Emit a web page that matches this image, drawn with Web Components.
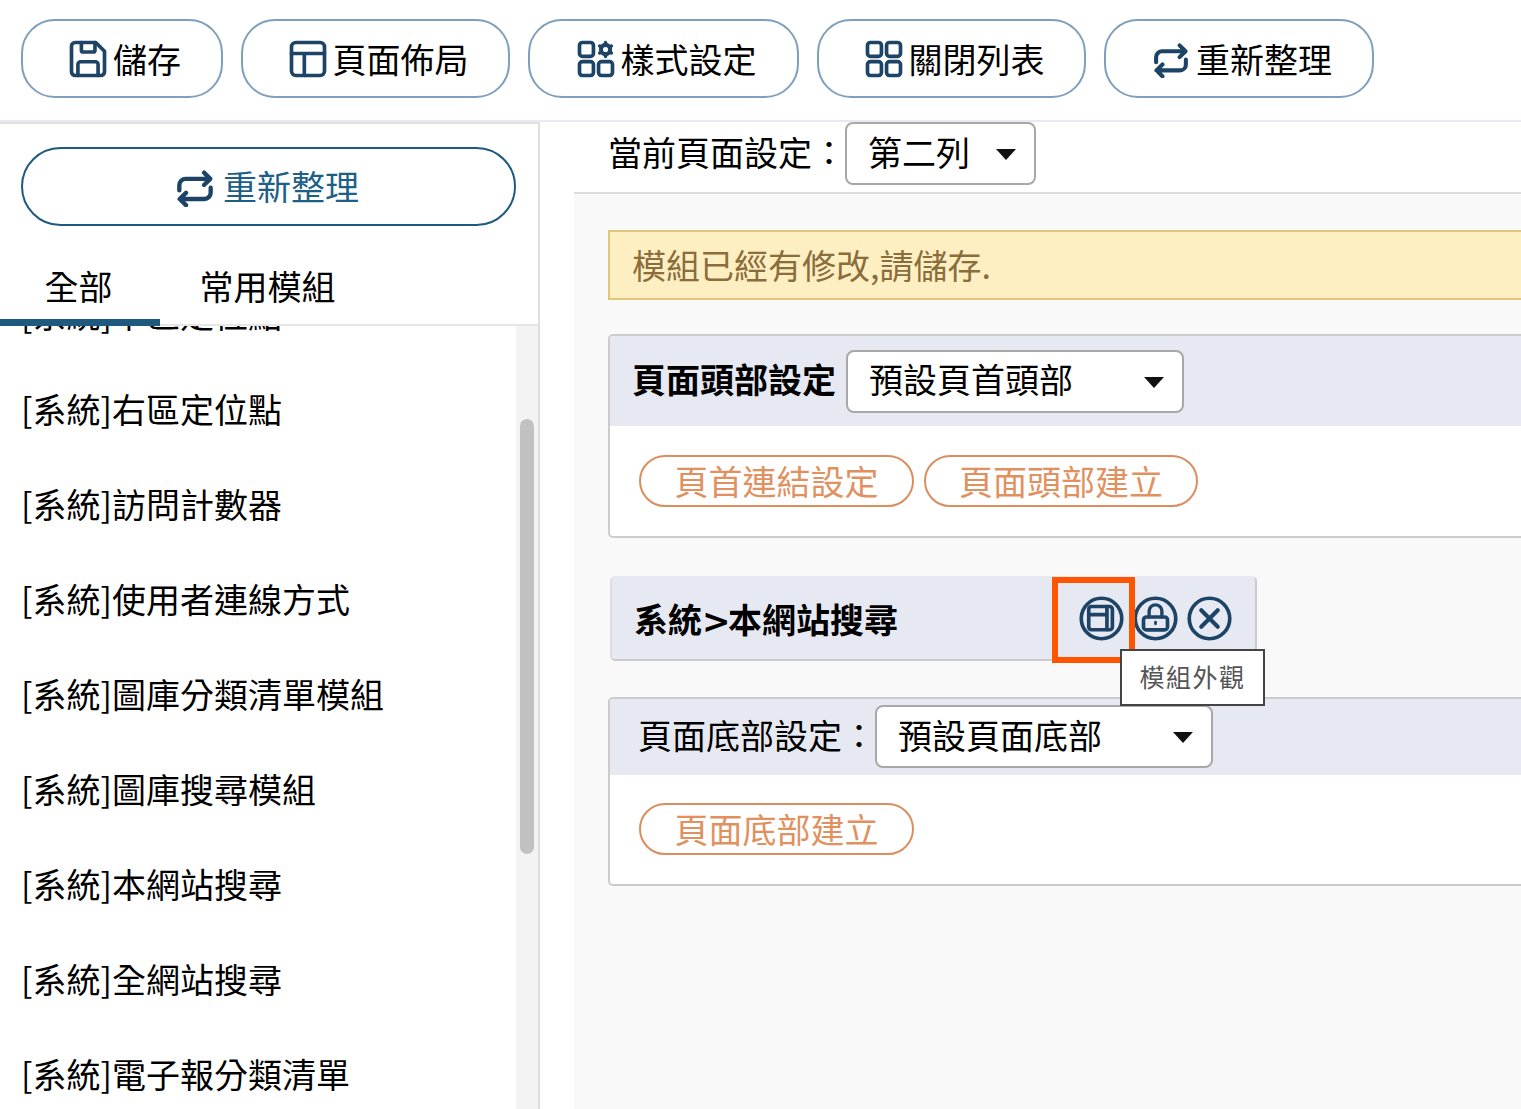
<!DOCTYPE html>
<html lang="zh-Hant"><head><meta charset="utf-8"><title>版面</title>
<style>
html,body{margin:0;padding:0;height:1109px;overflow:hidden;background:#fff;color:#000;font:34px/1.2 "Noto Sans CJK TC","Noto Sans",sans-serif}
</style></head><body>
<app-shell></app-shell>
<script>
const ICONS={
save:'<path d="M5 3h11.2L21 7.8V19a2 2 0 0 1-2 2H5a2 2 0 0 1-2-2V5a2 2 0 0 1 2-2z"/><path d="M8.4 3v4.2a1 1 0 0 0 1 1h5.4a1 1 0 0 0 1-1V3M6.5 21v-6a1.5 1.5 0 0 1 1.5-1.5h8a1.5 1.5 0 0 1 1.5 1.5v6"/>',
layout:'<rect x="3" y="3" width="18" height="18" rx="2.4"/><path d="M3 9h18M10 9v12"/>',
apps:'<rect x="3" y="3" width="7.6" height="7.6" rx="1.6"/><rect x="3" y="13.4" width="7.6" height="7.6" rx="1.6"/><rect x="13.4" y="13.4" width="7.6" height="7.6" rx="1.6"/><circle cx="17.2" cy="6.8" r="2.5" stroke-width="2.2"/><path d="M17.2 3v1M17.2 9.6v1M14 4.9l.9.5M19.5 8.2l.9.5M14 8.7l.9-.5M19.5 5.4l.9-.5" stroke-width="1.9"/>',
grid:'<rect x="3" y="3" width="7.6" height="7.6" rx="1.6"/><rect x="13.4" y="3" width="7.6" height="7.6" rx="1.6"/><rect x="3" y="13.4" width="7.6" height="7.6" rx="1.6"/><rect x="13.4" y="13.4" width="7.6" height="7.6" rx="1.6"/>',
repeat:'<path d="M2.6 14V10.9a3.8 3.8 0 0 1 3.8-3.8H21M17.4 3.4l3.8 3.7-3.8 3.7" stroke-width="2.6"/><path d="M21.4 12.4v3a3.8 3.8 0 0 1-3.8 3.8H3M6.6 15.5l-3.8 3.7 3.8 3.7" stroke-width="2.6"/>',
panel:'<circle cx="12" cy="12" r="10.8"/><rect x="5.2" y="5.6" width="12.6" height="12.4" rx="1.5"/><path d="M5.2 9.9h9.7M14.9 5.6V18"/>',
lock:'<circle cx="12" cy="12" r="10.8"/><rect x="5.6" y="11.2" width="12.8" height="6.9" rx="1.6"/><path d="M8.6 11.2V8.1a3.4 3.4 0 0 1 6.8 0v3.1" stroke-width="1.8"/><path d="M12 14v.8" stroke-width="1.5"/>',
close:'<circle cx="12" cy="12" r="10.8"/><path d="M7.6 7.6l8.8 8.8M16.4 7.6l-8.8 8.8" stroke-width="2.2"/>'
};
function def(name,css,html,init){
  customElements.define(name,class extends HTMLElement{
    constructor(){super();const r=this.attachShadow({mode:'open'});r.innerHTML='<style>'+css+'</style>'+(typeof html==='function'?html(this):html);}
    connectedCallback(){init&&init(this)}
  });
}
def('x-icon',':host{display:inline-flex;flex:none;width:var(--s,38px);height:var(--s,38px);color:#1d4466}svg{width:100%;height:100%;fill:none;stroke:currentColor;stroke-width:var(--w,2.3);stroke-linecap:round;stroke-linejoin:round}',
  el=>'<svg viewBox="0 0 24 24">'+(ICONS[el.getAttribute('name')]||'')+'</svg>');
def('tool-button',':host{display:inline-flex;align-items:center;justify-content:center;box-sizing:border-box;height:79px;padding-left:3px;border:2px solid #7f9fbd;border-radius:34px;background:#fff;gap:3px;white-space:nowrap;--s:44px;--w:2}span{margin-top:1px}','<slot name="icon"></slot><span><slot></slot></span>');
def('top-bar',':host{display:flex;gap:18px;box-sizing:border-box;height:122px;padding:19px 0 0 21px;border-bottom:2px solid #e8eaf2;background:#fff;align-items:flex-start}','<slot></slot>');
def('wide-button',':host{display:flex;align-items:center;justify-content:center;box-sizing:border-box;height:79px;padding-right:3px;border:2px solid #1e5a80;border-radius:40px;color:#1e5f88;gap:8px;background:#fff;--s:40px}','<slot></slot>');
def('tab-bar',':host{display:flex;box-sizing:border-box;height:100px;border-bottom:2px solid #e6e6e6;background:#fff;flex:none}','<slot></slot>');
def('tab-item',':host{display:flex;justify-content:center;box-sizing:border-box;height:100px;padding:39px 3px 0 0;flex:none;width:var(--tw,160px);line-height:41px}:host([active]){border-bottom:7px solid #1e5a80}','<slot></slot>');
def('list-item',':host{display:flex;align-items:center;height:95px;padding-left:21px;white-space:nowrap}','<slot></slot>');
def('fake-scroll',':host{display:block;flex:none;width:22px;background:#f3f3f3;padding:93px 4px 0;box-sizing:border-box}div{height:435px;background:#c1c1c1;border-radius:7px}','<div></div>');
def('side-bar',':host{display:flex;flex-direction:column;box-sizing:border-box;width:540px;flex:none;border-top:2px solid #e0e0e0;border-right:2px solid #ddd;background:#fff;overflow:hidden}.top{padding:23px 22px 0 21px;height:102px;box-sizing:border-box;flex:none}.rest{display:flex;flex:1;min-height:0;overflow:hidden}.list{flex:1;margin-top:-59px}',
 '<div class="top"><slot name="top"></slot></div><slot name="tabs"></slot><div class="rest"><div class="list"><slot></slot></div><fake-scroll></fake-scroll></div>');
def('select-box',':host{display:inline-flex;align-items:center;justify-content:space-between;box-sizing:border-box;height:63px;padding:0 18px 3px 21px;border:2px solid #a8a8a8;border-radius:8px;background:#fff;font-weight:400;white-space:nowrap;flex:none;width:var(--w)}i{width:0;height:0;border:10px solid transparent;border-top:11px solid #111;border-bottom:0;margin-top:5px}','<slot></slot><i></i>');
def('page-bar',':host{display:flex;align-items:flex-start;box-sizing:border-box;height:72px;padding-left:34px;border-bottom:2px solid #ddd;background:#fff}span{line-height:59px;width:237px;flex:none;white-space:nowrap}','<span><slot name="label"></slot></span><slot></slot>');
def('alert-box',':host{display:flex;align-items:center;box-sizing:border-box;height:70px;padding:0 0 0 22px;margin-bottom:34px;border:2px solid #e0c878;background:#feefc3;color:#8a6d3b}','<slot></slot>');
def('pill-button',':host{display:inline-flex;align-items:center;justify-content:center;box-sizing:border-box;width:var(--w,275px);height:52px;border:2px solid #dc8d5e;border-radius:26px;background:#fff;color:#e0915f;white-space:nowrap}','<slot></slot>');
def('setting-panel',':host{display:block;box-sizing:border-box;border:2px solid #ccc;border-radius:5px;background:#fff;margin-bottom:var(--mb,38px);overflow:hidden}.h{display:flex;align-items:center;box-sizing:border-box;height:var(--hh,90px);background:#e6e9f2;padding-left:var(--hp,22px);gap:var(--hg,10px);white-space:nowrap}.b{display:flex;gap:10px;padding:var(--bp,29px) 0 0 29px;height:var(--bh,110px);box-sizing:border-box}',
 '<div class="h"><slot name="head"></slot></div><div class="b"><slot></slot></div>');
def('module-bar',':host{display:flex;align-items:center;box-sizing:border-box;position:relative;width:647px;height:85px;margin:0 0 36px 2px;border:2px solid #ccc;border-top-color:#e6e9f2;border-left-color:#ddd;border-radius:5px;background:#e6e9f2;padding-left:22px;font-weight:700;white-space:nowrap}.t{flex:1;margin-top:3px}.i{display:flex;gap:9px;margin-right:23px;--s:45px;--w:1.95}.mark{position:absolute;left:440px;top:-1px;width:83px;height:86px;box-sizing:border-box;border:6px solid #ff5500;pointer-events:none}.tip{position:absolute;left:508px;top:71px;width:145px;height:57px;box-sizing:border-box;border:2px solid #444;background:#fff;color:#555;font-size:25px;font-weight:400;letter-spacing:1.5px;display:flex;align-items:center;justify-content:center;padding-bottom:4px;z-index:3}',
 '<span class="t"><slot></slot></span><div class="i"><x-icon name="panel"></x-icon><x-icon name="lock"></x-icon><x-icon name="close"></x-icon></div><div class="mark"></div><div class="tip">模組外觀</div>');
def('main-area',':host{display:block;flex:1;min-width:0;padding-left:34px;overflow:hidden;background:#fff}.c{background:#f9f9f9;height:100%;padding:36px 0 0 34px;margin-right:-20px}','<slot name="bar"></slot><div class="c"><slot></slot></div>');
def('app-shell',':host{display:flex;flex-direction:column;height:1109px;overflow:hidden}.row{display:flex;flex:1;min-height:0}',`
<top-bar>
<tool-button style="width:202px"><x-icon slot="icon" name="save"></x-icon>儲存</tool-button>
<tool-button style="width:269px"><x-icon slot="icon" name="layout"></x-icon>頁面佈局</tool-button>
<tool-button style="width:271px"><x-icon slot="icon" name="apps"></x-icon>樣式設定</tool-button>
<tool-button style="width:269px"><x-icon slot="icon" name="grid"></x-icon>關閉列表</tool-button>
<tool-button style="width:270px"><x-icon slot="icon" name="repeat" style="--s:38px;--w:2.3;margin:0 3px"></x-icon>重新整理</tool-button>
</top-bar>
<div class="row">
<side-bar>
<wide-button slot="top"><x-icon name="repeat"></x-icon>重新整理</wide-button>
<tab-bar slot="tabs"><tab-item active>全部</tab-item><tab-item style="--tw:218px">常用模組</tab-item></tab-bar>
<list-item>[系統]中區定位點</list-item>
<list-item>[系統]右區定位點</list-item>
<list-item>[系統]訪問計數器</list-item>
<list-item>[系統]使用者連線方式</list-item>
<list-item>[系統]圖庫分類清單模組</list-item>
<list-item>[系統]圖庫搜尋模組</list-item>
<list-item>[系統]本網站搜尋</list-item>
<list-item>[系統]全網站搜尋</list-item>
<list-item>[系統]電子報分類清單</list-item>
</side-bar>
<main-area>
<page-bar slot="bar"><span slot="label">當前頁面設定：</span><select-box style="--w:191px">第二列</select-box></page-bar>
<alert-box>模組已經有修改,請儲存.</alert-box>
<setting-panel><b slot="head" style="margin-bottom:3px">頁面頭部設定</b><select-box slot="head" style="--w:338px">預設頁首頭部</select-box>
<pill-button>頁首連結設定</pill-button><pill-button style="--w:274px">頁面頭部建立</pill-button></setting-panel>
<module-bar>系統<span style="font-family:'DejaVu Sans';letter-spacing:-2.5px">&gt;</span>本網站搜尋</module-bar>
<setting-panel style="--hh:76px;--hp:28px;--hg:0px;--bp:28px;--bh:109px"><span slot="head" style="width:237px;margin-bottom:4px">頁面底部設定：</span><select-box slot="head" style="--w:338px;margin-bottom:1px">預設頁面底部</select-box>
<pill-button>頁面底部建立</pill-button></setting-panel>
</main-area>
</div>`);
</script>
</body></html>
